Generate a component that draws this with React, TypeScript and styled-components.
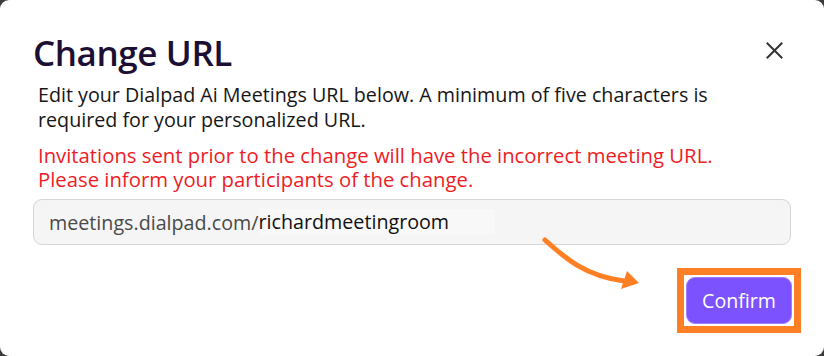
import React from "react";
import styled, { createGlobalStyle } from "styled-components";

const Global = createGlobalStyle`
  html, body { margin: 0; padding: 0; background: #3b3b3b; }
  body { font-family: "Open Sans", "Noto Sans", sans-serif; }
  * { box-sizing: border-box; }
`;

const Dialog = styled.div`
  width: 824px;
  height: 356px;
  background: #ffffff;
  border-radius: 9px;
  padding: 30px 33px 0 33px;
  display: flex;
  flex-direction: column;
`;

const Header = styled.div`
  display: flex;
  justify-content: space-between;
  align-items: flex-start;
`;

const Title = styled.h1`
  margin: 0;
  font-size: 35px;
  line-height: 46px;
  font-weight: 600;
  color: #1c0f33;
  letter-spacing: -0.4px;
`;

const CloseButton = styled.button`
  border: 0;
  background: transparent;
  padding: 0;
  margin: 12px 8px 0 0;
  width: 17px;
  height: 17px;
  display: flex;
  align-items: center;
  justify-content: center;
  cursor: pointer;
`;

const Paragraph = styled.p<{ $tone?: "warn" }>`
  margin: 0 0 0 5px;
  font-size: ${(p) => (p.$tone === "warn" ? "20.3px" : "19.7px")};
  line-height: ${(p) => (p.$tone === "warn" ? "24px" : "25px")};
  color: ${(p) => (p.$tone === "warn" ? "#ee1c25" : "#161616")};
`;

const Gap = styled.div<{ $h: number }>`
  height: ${(p) => p.$h}px;
  flex: none;
`;

const Field = styled.div`
  height: 46px;
  flex: none;
  border: 1px solid #d6d6d6;
  border-radius: 9px;
  background: #f5f5f5;
  display: flex;
  align-items: center;
  padding-left: 15px;
  font-size: 19.7px;
`;

const Prefix = styled.span`
  color: #4a4a4a;
`;

const Slug = styled.span`
  color: #111111;
  background: #f8f8f8;
  padding-right: 46px;
  line-height: 26px;
`;

const Footer = styled.div`
  display: flex;
  justify-content: flex-end;
  align-items: flex-start;
  position: relative;
  margin-right: -10px;
`;

const Highlight = styled.div`
  border: 7px solid #ff7f24;
  padding: 2px;
  background: #fff;
`;

const ConfirmButton = styled.button`
  width: 106px;
  height: 47px;
  border-radius: 9px;
  border: 1px solid #9d80ff;
  background: #7c52ff;
  color: #ffffff;
  font-family: inherit;
  font-size: 19.6px;
  display: flex;
  align-items: center;
  justify-content: center;
  cursor: pointer;
`;

const Arrow = styled.svg`
  position: absolute;
  left: 507px;
  top: -32px;
  overflow: visible;
`;

export default function App() {
  return (
    <>
      <Global />
      <Dialog>
        <Header>
          <Title>Change URL</Title>
          <CloseButton aria-label="Close">
            <svg width="17" height="17" viewBox="0 0 17 17">
              <path d="M1.5 1.5 L15.5 15.5 M15.5 1.5 L1.5 15.5" stroke="#333" strokeWidth="2" strokeLinecap="square" />
            </svg>
          </CloseButton>
        </Header>
        <Gap $h={6} />
        <Paragraph>
          Edit your Dialpad Ai Meetings URL below. A minimum of five characters is
          <br />
          required for your personalized URL.
        </Paragraph>
        <Gap $h={11} />
        <Paragraph $tone="warn">
          Invitations sent prior to the change will have the incorrect meeting URL.
          <br />
          Please inform your participants of the change.
        </Paragraph>
        <Gap $h={8} />
        <Field>
          <Prefix>meetings.dialpad.com/</Prefix>
          <Slug>richardmeetingroom</Slug>
        </Field>
        <Gap $h={23} />
        <Footer>
          <Arrow width="100" height="60" viewBox="0 0 100 60">
            <path d="M5 4 C 25 22, 45 40, 84 45" stroke="#ff7f24" strokeWidth="5" fill="none" strokeLinecap="round" />
            <path d="M87 35 L99 47 L81 53 Z" fill="#ff7f24" />
          </Arrow>
          <Highlight>
            <ConfirmButton>Confirm</ConfirmButton>
          </Highlight>
        </Footer>
      </Dialog>
    </>
  );
}
